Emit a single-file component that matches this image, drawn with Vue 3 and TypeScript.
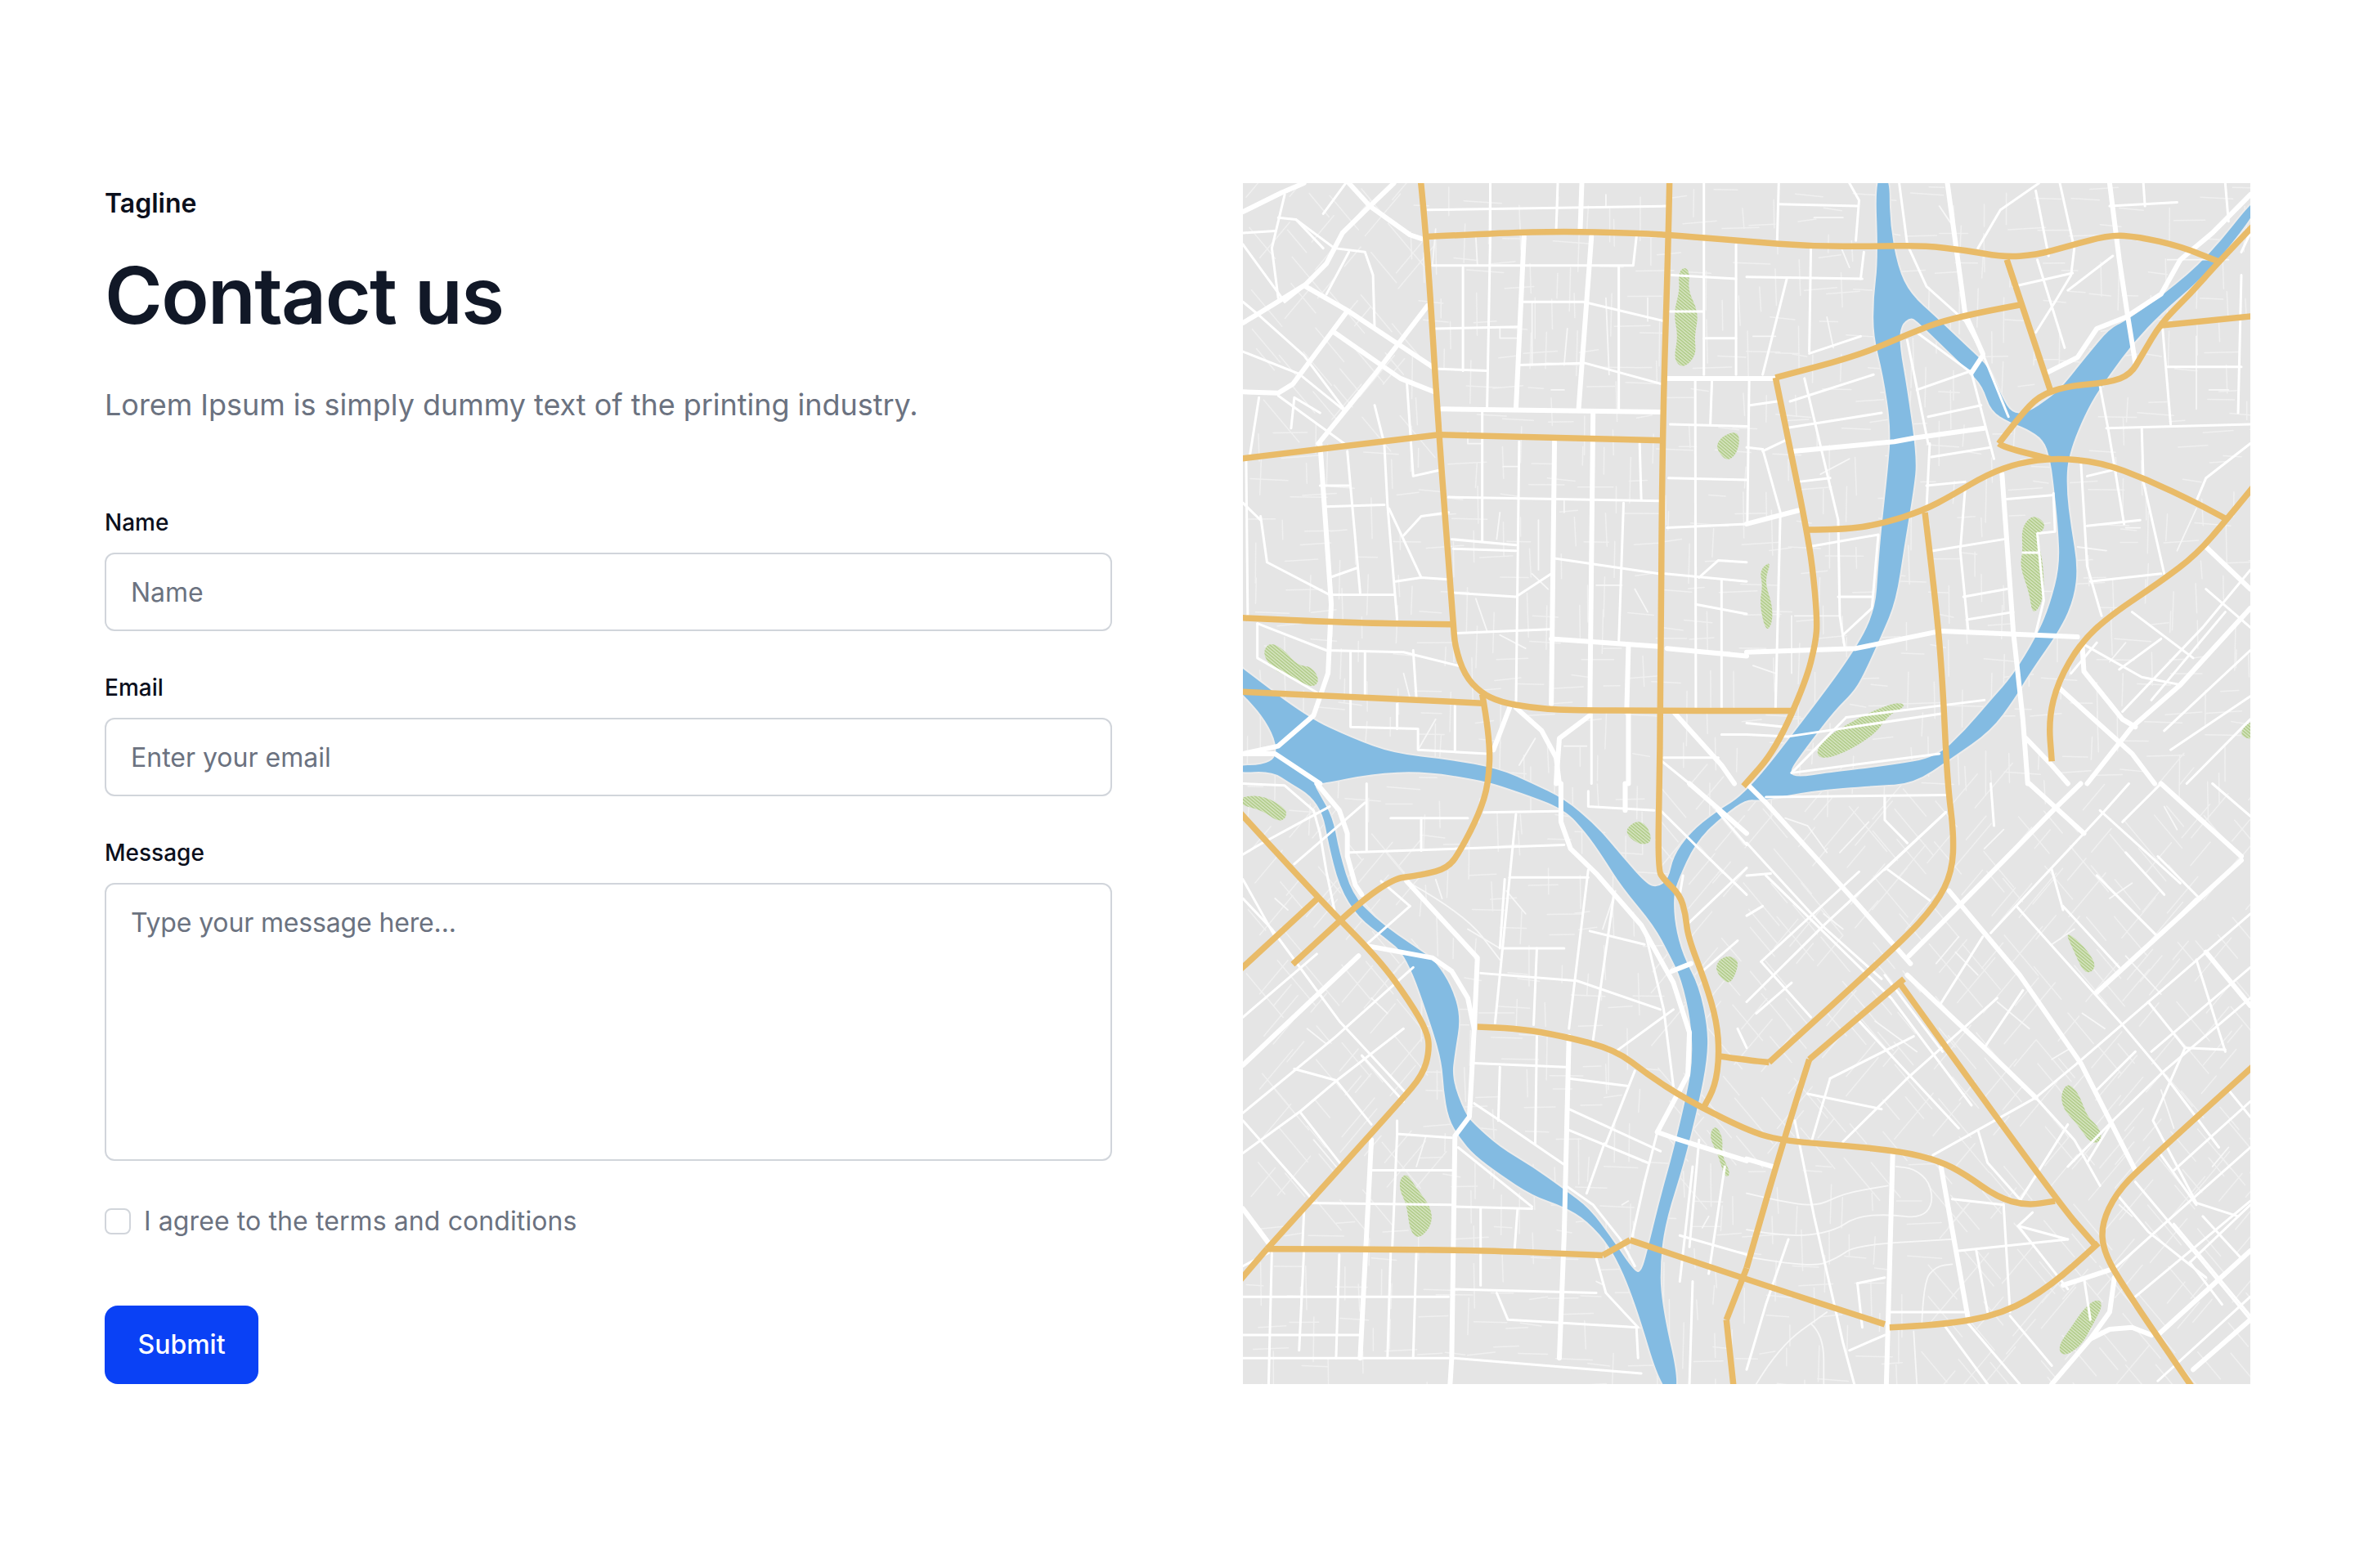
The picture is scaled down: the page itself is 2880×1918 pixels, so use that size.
<template>
  <section class="contact">
    <div class="left">
      <div class="intro">
        <p class="tagline">Tagline</p>
        <h1 class="title">Contact us</h1>
        <p class="lead">Lorem Ipsum is simply dummy text of the printing industry.</p>
      </div>
      <form class="form" @submit.prevent>
        <div class="field">
          <label class="label" for="name">Name</label>
          <input id="name" class="input" type="text" placeholder="Name">
        </div>
        <div class="field">
          <label class="label" for="email">Email</label>
          <input id="email" class="input" type="email" placeholder="Enter your email">
        </div>
        <div class="field">
          <label class="label" for="message">Message</label>
          <textarea id="message" class="input area" placeholder="Type your message here..."></textarea>
        </div>
        <label class="terms">
          <input class="check" type="checkbox">
          <span>I agree to the terms and conditions</span>
        </label>
        <button class="submit" type="submit">Submit</button>
      </form>
    </div>
    <div class="map">
      <svg viewBox="0 0 3136 3136" preserveAspectRatio="none" role="img" aria-label="City map">
        <defs>
          <pattern id="hatch" width="7" height="7" patternUnits="userSpaceOnUse" patternTransform="rotate(35)">
            <rect width="7" height="7" fill="#d6e4c2" />
            <rect width="7" height="3.8" fill="#b3cd8c" />
          </pattern>
        </defs>
        <rect width="3136" height="3136" fill="#e5e5e5" />
        <path v-for="(d, i) in faint" :key="'f' + i" class="street faint" :d="d" />
        <path class="river" :d="riverPath" fill-rule="evenodd" />
        <path v-for="(d, i) in parkPaths" :key="'p' + i" class="park" :d="d" />
        <path v-for="(d, i) in thinStreets" :key="'t' + i" class="street thin" :d="d" />
        <path v-for="(d, i) in midStreets" :key="'m' + i" class="street mid" :d="d" />
        <path v-for="(d, i) in bigStreets" :key="'b' + i" class="street big" :d="d" />
        <path v-for="(d, i) in roadPaths" :key="'r' + i" class="road" :d="d" />
      </svg>
    </div>
  </section>
</template>

<script setup lang="ts">
type Pt = [number, number]

// the map is split in four 1568 x 1568 quarters, a letter in a string switches quarter
const HALF = 1568
const offsets: Record<string, Pt> = { A: [0, 0], B: [HALF, 0], C: [0, HALF], D: [HALF, HALF] }

const parse = (s: string): Pt[] => {
  let off: Pt = [0, 0]
  const pts: Pt[] = []
  for (const tok of s.trim().split(/\s+/)) {
    if (offsets[tok]) {
      off = offsets[tok]
      continue
    }
    const [x, y] = tok.split(',').map(Number)
    pts.push([x + off[0], y + off[1]])
  }
  return pts
}

const line = (s: string) =>
  parse(s).map((p, i) => (i ? 'L' : 'M') + p[0] + ' ' + p[1]).join('')

const mid = (a: Pt, b: Pt): Pt => [(a[0] + b[0]) / 2, (a[1] + b[1]) / 2]

const curve = (s: string) => {
  const p = parse(s)
  let d = `M${p[0][0]} ${p[0][1]}`
  for (let i = 1; i < p.length - 1; i++) {
    const m = mid(p[i], p[i + 1])
    d += `Q${p[i][0]} ${p[i][1]} ${m[0]} ${m[1]}`
  }
  const e = p[p.length - 1]
  return `${d}L${e[0]} ${e[1]}`
}

const blob = (s: string) => {
  const p = parse(s)
  const start = mid(p[p.length - 1], p[0])
  let d = `M${start[0]} ${start[1]}`
  p.forEach((c, i) => {
    const m = mid(c, p[(i + 1) % p.length])
    d += `Q${c[0]} ${c[1]} ${m[0]} ${m[1]}`
  })
  return d + 'Z'
}

const at = (q: string, list: string[]) => list.map((s) => `${q} ${s}`)

const riverOuter = `A -20,1255 0,1268 200,1395 340,1450 470,1490 640,1505 800,1530 900,1568
  C 1000,40 1100,110 1180,190 1255,262 1290,272 1325,250 1340,190 1390,130 1470,75 1568,25
  B 180,1400 330,1230 400,1120 410,1000 420,900 440,750 450,640 425,500 395,400 395,300 410,200 400,-20
  445,-20 445,100 470,220 510,290 590,350 690,430 755,480 795,560 825,600 870,602 945,560 985,530 1060,450
  1130,380 1180,360 1300,290 1440,190 1590,30 1590,70 1480,190 1400,260 1290,340 1205,415 1130,500 1065,580
  1000,710 995,800 1010,900 1030,1000 1020,1080 980,1160 880,1280 835,1345 760,1430 640,1500
  D 520,0 400,5 200,18 45,45 0,40
  C 1500,80 1410,150 1350,260 1340,300 1345,370 1370,450 1420,530 1447,640 1445,720 1420,830 1370,1000
  1320,1130 1300,1230 1300,1350 1365,1590 1305,1590 1220,1350 1150,1215 1070,1140 1000,1105 900,1075 800,1020
  720,970 675,925 640,875 625,800 620,730 590,640 510,450 440,400 360,350 300,270 265,150 250,80 210,30 150,0
  A 90,1535 -20,1540 -20,1520 60,1520 105,1500 100,1450 60,1390 0,1335 -20,1320`

const islandEast = `B 510,350 480,370 475,420 500,540 530,720 520,800 490,950 465,1090 420,1180 360,1290 330,1330
  270,1380 170,1490 130,1540 160,1552 250,1540 450,1520 590,1500 680,1430 760,1350 830,1285 905,1180 945,1100
  975,1000 970,900 955,780 945,720 925,670 870,640 820,625 760,595 735,530 690,490 610,425 530,360`

const islandWest = `A 245,1568 400,1542 560,1535 750,1560 860,1590
  C 1000,65 1070,130 1120,190 1180,270 1280,370 1330,450 1365,510 1395,620 1400,720 1385,800 1340,960 1300,1080
  1265,1200 1240,1280 1215,1270 1150,1190 1080,1110 1000,1060 900,1000 800,950 720,890 690,860 650,770 660,700
  678,610 650,530 600,465 560,440 480,395 410,350 340,290 300,180 280,90 240,30 220,0`

const riverPath = blob(riverOuter) + blob(islandEast) + blob(islandWest)

const parkPaths = [
  'A 1375,218 1392,235 1385,280 1420,340 1405,400 1412,450 1370,485 1340,460 1355,400 1340,340 1360,280 1355,235',
  'A 1535,647 1548,670 1535,710 1505,727 1470,690 1490,662',
  'A 85,1198 130,1220 170,1260 215,1262 240,1300 215,1318 160,1295 90,1270 60,1225',
  'B 78,985 55,1040 80,1100 80,1150 60,1172 40,1100 50,1050 40,1010',
  'B 470,1355 498,1365 440,1390 400,1440 300,1490 230,1505 215,1480 260,1440 320,1410 400,1375',
  'B 890,865 928,885 925,905 903,920 925,1000 925,1090 890,1130 880,1070 850,1000 860,960 855,900',
  'B 1590,1400 1550,1415 1535,1445 1590,1455',
  'C -10,35 60,30 135,65 135,90 110,100 60,70 -10,55',
  'C 1225,95 1260,110 1275,155 1230,160 1185,125',
  'C 1515,448 1545,465 1530,505 1510,525 1470,490 1480,460',
  'C 510,1018 535,1050 585,1105 590,1150 550,1190 520,1170 510,1100 487,1060 490,1030',
  'C 1470,890 1495,925 1490,970 1520,1020 1500,1030 1480,970 1450,920',
  'D 990,385 1040,415 1085,465 1080,490 1050,495 1020,440',
  'D 1000,780 1035,810 1060,870 1100,900 1105,935 1070,940 1030,890 985,850 978,810',
  'D 1090,1345 1110,1360 1080,1410 1040,1470 985,1497 968,1470 1010,1420 1050,1370',
].map(blob)

const roadCurves = [
  'A 553,-10 572,140 610,660 655,1150 660,1210 690,1285 740,1330 800,1355 900,1370 1000,1376 1300,1378 1568,1378 B 150,1378',
  'A 572,140 800,130 1000,126 1200,130 1325,135 1568,152 B 200,165 400,165 550,163 680,175 800,193 900,188 1000,165 1130,135 1220,140 1350,165 1470,205',
  'A 1328,-10 1325,135 1305,670 1300,1378 1296,1568 C 1292,225 1310,250 1360,290 1378,340 1385,400 1440,520 1475,620 1483,710 1470,790 1435,845',
  'B 1590,100 1470,205 1380,290 1290,365 1230,450 1195,500 1130,520 1000,530 910,555 850,610 785,680',
  'B 785,680 800,690 945,720',
  'B 810,200 945,540',
  'B 850,318 640,350 500,395 350,450 90,508',
  'B 90,508 150,750 185,900 205,1000 220,1140 215,1200 185,1300 90,1480 -10,1575',
  'B 1285,372 1590,346',
  'B 185,905 300,905 420,890 550,855 640,815 750,760 850,730 960,718 1100,728 1250,775 1400,835 1495,878',
  'B 555,860 590,1100 610,1300 625,1568 D 645,130 640,230 590,315 480,415 70,728',
  'C 1483,712 1568,722 D 70,728',
  'B 1590,780 1495,878 1400,970 1290,1040 1130,1130 1040,1200 970,1300 940,1400 950,1510',
  'A -10,720 610,657',
  'A 610,657 1305,672',
  'A -10,1135 300,1148 650,1152',
  'A -10,1328 745,1358',
  'A 745,1335 770,1450 765,1568 C 735,80 680,170 640,220 560,238 440,252 155,472',
  'C -10,75 235,300 420,455 520,570 575,650 580,700 560,760 490,830 75,1215',
  'C 75,1215 -10,1298',
  'C -10,487 235,298',
  'C 75,1215 650,1215 1120,1232',
  'C 1120,1232 1205,1192',
  'C 1205,1192 1568,1295 D 430,1412',
  'D 445,1420 600,1415 800,1385 950,1310 1095,1200',
  'C 730,635 850,638 1000,660 1160,695 1260,760 1380,825 1568,905 D 105,932 300,945 480,960 600,985 680,1020 780,1080 870,1102 960,1090',
  'D 490,510 195,720',
  'D 195,720 115,930 0,1265',
  'D 0,1265 -63,1400',
  'D -63,1400 -40,1580',
  'D 480,525 960,1085 1090,1210',
  'D 1590,728 1230,1000 1150,1070 1105,1150 1110,1220 1170,1310 1390,1580',
]
const roadPaths = roadCurves.map(curve)

const bigStreets = [
  ...at('A', [
    '0,75 120,25 190,0', '330,0 395,60 520,135 555,145', '470,0 395,60 310,130 260,210 195,265 50,340 0,365',
    '195,270 330,335 590,480', '285,390 490,510 595,545', '0,545 110,548 155,525 320,340',
    '235,680 410,500 575,320', '240,680 275,1100 265,1280 220,1390 110,1470 0,1490', '0,1490 100,1490 240,1568',
    '1055,0 1050,120', '1085,140 1045,590', '875,140 850,590', '620,590 1305,598', '1090,598 1080,1370',
    '970,675 960,1360', '960,1190 1295,1210', '1200,1210 1195,1370', '780,1480 830,1370',
    '850,1370 930,1430 975,1500 985,1568', '975,1568 985,1450 1080,1390', '1200,1380 1200,1568',
    '1345,1385 1490,1520 1530,1568', '1320,510 1568,510', '1320,1215 1568,1235',
  ]),
  ...at('B', [
    '0,510 85,510', '0,890 160,855', '795,760 830,1170 860,1400 875,1568', '700,495 735,450',
    '1130,0 1160,200 1185,340 1210,470', '935,495 1030,455 1090,380 1180,350 1290,290 1350,200 1450,130 1568,30',
    '975,1320 1200,1490 1270,1568', '870,1450 950,1520 1000,1568', '1568,1110 1350,1310 1200,1420 1060,1568',
    '1430,950 1568,1060', '145,700 460,675 525,665 740,640', '0,1225 340,1215 600,1170', '610,1170 1030,1185',
    '625,0 680,340 735,445', '1045,1210 1050,1275 1170,1400 1210,1420',
  ]),
  ...at('C', [
    '230,0 300,70 325,130 325,190 350,265 370,290', '510,255 730,455 720,640 705,870 660,920 650,1500 645,1568',
    '395,425 590,455 650,490 700,560 720,640', '990,0 990,100 1020,170 1100,235 1240,370 1340,520 1390,650 1385,760 1360,800',
    '1335,490 1395,470', '1290,910 1340,925 1568,985', '1015,660 1000,1180 985,1500', '0,735 360,450',
    '0,1110 80,1200', '400,930 365,1500', '1190,0 1190,70', '1360,800 1290,910', '1390,0 1568,130',
  ]),
  ...at('D', [
    '0,0 60,50 330,300 510,470', '500,500 740,690 900,820', '630,280 850,500 1040,730 1210,1010',
    '880,0 1050,130', '1290,0 1540,190', '1430,440 1568,580', '505,450 660,320 960,65 1040,0',
    '1090,545 1540,200', '0,980 80,1000', '455,960 435,1568', '985,1310 1130,1270', '1145,1290 1130,1380 1070,1450 950,1568',
    '1070,1450 1130,1425 1200,1420 1260,1440', '1280,1440 1568,1220', '1390,1530 1568,1400', '605,1000 690,1400',
  ]),
].map(line)

const midStreets = [
  ...at('A', [
    '575,70 1320,60', '770,0 770,130', '770,140 760,590', '980,0 975,125', '590,215 1215,215 1225,140',
    '685,220 685,490', '600,380 860,375', '610,485 760,490', '870,310 1060,310 1310,360', '1065,470 1305,525',
    '860,475 1060,470', '745,595 745,935', '640,820 1300,830', '1170,220 1170,590', '860,675 850,1370',
    '1185,835 1170,1200', '1235,680 1240,825', '650,930 850,945', '655,955 850,960', '970,980 1295,1020',
    '660,1070 850,1080 960,1020', '665,1175 955,1165', '475,1040 555,1030 640,1035', '455,850 555,1030',
    '510,515 530,765 610,750', '325,700 365,1070', '255,845 440,840', '240,790 330,790',
    '55,870 75,990 270,1075 470,1075', '0,835 55,880', '270,1030 355,1005', '10,720 15,1130',
    '45,1150 45,1240 230,1330', '45,1150 260,1220 500,1225 670,1260', '335,1225 335,1420 545,1425 545,1480 760,1490',
    '380,1225 380,1340', '530,1220 540,1345', '480,1360 480,1425', '660,1365 660,1480', '1085,1385 1085,1568',
    '1310,1500 1480,1500', '1305,1510 1390,1568', '1490,1440 1568,1440', '1435,0 1435,500', '1535,160 1535,500',
    '1335,240 1535,250', '1330,335 1435,335', '1435,405 1535,405', '1408,515 1410,1380', '1460,515 1455,630',
    '1330,630 1568,635', '1325,770 1568,775', '1320,900 1568,890', '1315,1020 1568,1040', '1490,1035 1490,1370',
    '1410,1100 1568,1125', '1420,1030 1480,985 1568,990', '130,30 90,170 110,300',
    '110,90 165,95 285,170 380,180 405,240 410,380', '250,80 320,0', '0,130 100,125', '0,160 130,310',
    '50,345 190,450 315,590', '185,505 310,590', '110,555 315,680', '410,580 440,680 450,840 480,1140',
    '0,440 180,500', '50,560 20,720', '165,95 250,170', '0,310 50,345', '130,310 190,270', '330,180 260,290',
    '150,640 160,560 240,600', '500,920 555,870 640,860',
  ]),
  ...at('B', [
    '100,0 95,150', '100,55 345,60', '320,0 350,45 340,150', '125,250 50,500', '0,245 360,250', '200,170 195,440',
    '195,445 355,400', '365,180 355,250', '8,515 2,890', '10,580 95,570', '0,690 50,695', '50,695 105,860 90,1370',
    '50,700 125,670', '135,570 395,500', '120,640 420,600', '180,510 285,880 290,1130 305,1210', '160,780 260,770',
    '190,950 410,918 390,1110 300,1180', '285,1080 390,1080', '130,1445 610,1385', '310,1395 740,1350',
    '140,1540 310,1395', '140,1540 600,1490', '530,390 700,495', '700,495 770,720', '475,0 500,160 560,270 680,360 735,445 815,610',
    '570,680 560,850', '560,790 680,780', '575,715 760,690', '500,410 565,680', '530,540 700,490', '565,610 730,580',
    '680,800 665,960 690,1170', '580,960 800,930', '675,1080 810,1060', '685,1140 830,1120', '810,825 950,815',
    '955,810 960,910 905,915 925,1090 900,1175', '860,965 910,965', '1100,530 1125,640 1175,890', '1040,720 1060,1000 1105,1130',
    '1060,895 1225,880', '1120,640 1568,630', '1230,640 1235,780 1300,1020', '1060,765 1160,745', '1070,1040 1290,1020',
    '975,0 1020,170 1010,240 960,310 900,390', '910,0 790,70 720,170', '905,200 990,430', '830,270 1015,235', '900,20 940,190',
    '1000,280 1140,190', '1130,60 1340,50', '1235,0 1240,60', '1490,0 1500,100', '1295,380 1320,630', '1310,480 1540,480',
    '1540,240 1530,600', '1540,180 1568,130', '1400,830 1430,770 1568,680', '1040,1200 1230,1290 1350,1310',
    '1430,1060 1568,1160', '1170,1380 1420,1160 1568,1010', '1260,1350 1490,1120', '1300,1430 1568,1220',
    '1320,1480 1568,1340', '1370,1568 1568,1400', '1160,1270 1290,1190', '1200,1120 1390,1240', '1090,1200 1010,1280',
    '0,1440 130,1445', '0,1410 120,1420',
  ]),
  ...at('C', [
    '0,0 130,5 220,70 240,130 260,230 285,330', '385,420 520,320', '1250,1040 1210,1190', '1290,910 1250,1040',
    '850,80 785,625', '1075,225 1015,640', '0,300 90,380 300,620 510,810', '0,860 290,660 530,480',
    '0,965 180,855 300,770 500,640', '0,610 230,445', '0,185 50,160 270,60', '160,210 380,50', '180,860 310,1000',
    '0,880 210,1080', '160,745 290,775', '290,775 400,890', '370,710 500,830', '480,880 480,915 650,925', '480,915 465,1210',
    '395,1010 650,1010', '200,1095 650,1100', '660,1105 900,1110', '190,1120 185,1210', '90,1225 80,1568',
    '190,1220 175,1480', '300,1230 290,1500', '460,1225 450,1500', '540,1225 530,1500', '0,1340 640,1340', '0,1440 370,1440',
    '0,1500 640,1500', '650,1500 1240,1540', '650,1320 1100,1330', '790,1330 825,1400 1230,1420', '1225,1420 1230,1500',
    '1100,1240 1130,1330 1230,1420', '740,1110 740,1310', '855,1110 845,1225', '720,835 800,880 1000,995', '670,950 900,1105',
    '1005,1050 1090,1100 1175,1190 1220,1260', '720,730 1005,740', '800,740 795,880', '915,660 910,940', '1015,770 1200,790',
    '1015,850 1300,960', '1015,905 1260,990', '1125,940 1070,1070', '1220,750 1130,940', '1160,700 1340,590',
    '330,180 1000,160', '750,75 980,72', '385,0 385,175', '555,90 555,175', '460,90 700,90', '810,430 1000,430',
    '740,495 1040,515 1300,590', '1080,385 1250,420', '915,430 905,630', '830,245 1075,245', '800,430 815,250', '1155,290 1090,670',
    '1250,380 1310,590 1340,790', '1370,240 1360,290', '1300,70 1420,170 1568,290', '1475,70 1568,160', '1380,370 1568,220',
    '1430,490 1540,410', '1540,640 1568,690', '1075,20 1075,60 1280,70', '1400,1000 1360,1300', '1420,930 1390,1210',
    '1500,1000 1450,1280', '1400,1300 1390,1568', '1360,1180 1568,1230', '0,250 100,400', '80,1225 0,1260', '430,255 520,320',
  ]),
  ...at('D', [
    '1100,70 1350,260', '1450,0 1568,85', '840,320 1170,630 1300,760 1470,950', '900,820 1020,930 1100,1050',
    '760,390 1100,85 1190,0', '1030,730 1568,340', '1140,880 1300,750 1568,560', '0,570 240,370 620,75', '600,580 735,400',
    '740,690 860,540', '580,970 900,820 1030,730', '0,155 240,375', '350,620 660,900', '45,465 200,610', '240,375 420,510',
    '430,35 430,95 500,155', '620,75 430,225', '440,225 570,305', '60,35 620,30', '760,0 770,110', '950,225 985,330',
    '985,320 1160,480', '1090,240 1280,400', '1365,690 1490,695', '1365,690 1265,880 1400,1095 1530,1130', '720,905 750,990 855,1090',
    '1000,890 850,1090', '190,810 420,850', '260,770 200,940', '260,770 520,660', '300,935 500,770 780,560', '150,880 210,1130 300,1460 335,1568',
    '800,1100 820,1380', '715,1220 750,1380', '640,1085 800,1100', '845,1155 890,1120', '845,1155 1000,1320', '845,1155 1000,1190',
    '1050,1290 1070,1400', '345,1305 430,1290', '345,1305 360,1420', '445,1380 690,1380', '320,1480 430,1440', '130,1190 60,1360 0,1530',
    '620,1420 750,1568', '820,1390 950,1520', '690,1410 850,1568', '1210,1340 1568,1090', '1140,1270 1300,1150 1568,950',
    '1210,1040 1390,1220 1568,1400', '1290,970 1400,1100', '1500,800 1568,870', '1380,1250 1480,1360', '60,240 450,560 700,840',
    '430,500 610,700', '0,345 50,320', '0,240 75,235', '1000,1000 1140,880', '1060,990 1140,880', '1210,700 1090,800',
    '1250,570 1365,690', '1400,460 1490,700', '1150,1070 1250,1170 1430,1290', '660,1220 1000,1190',
    '1280,190 1410,300', '1280,400 1400,300', '1260,700 1568,480', '1330,1150 1568,1390', '1380,1250 1568,1100',
    '1280,1560 1568,1340', '30,600 140,520', '45,465 350,230', '1170,100 1290,0', '1180,180 1300,290',
    '1420,1130 1540,1240', '1330,1010 1568,830',
  ]),
].map(line)

const curvedStreets = [
  'D 0,1070 100,1090 220,1105 300,1070 440,1050',
  'D 0,1165 130,1185 270,1170 340,1130 445,1125 540,1135 580,1100 570,1040 520,1005 465,1000',
  'D 0,1235 200,1265 280,1240 340,1205 640,1190',
  'D 545,1420 550,1300 590,1260 640,1255',
  'D 30,1568 100,1470 250,1380',
  'D 200,1410 240,1440 240,1568',
  'D 520,1430 530,1568',
  'C 520,260 690,340 800,460',
].map(curve)

const thinStreets = [
  ...curvedStreets,
  ...at('A', [
    '600,120 590,215', '725,140 730,215', '1130,30 1130,60', '900,310 900,475', '800,380 800,405 860,405',
    '1010,380 1000,475', '960,540 1000,540', '1130,300 1140,500', '1260,300 1260,360', '700,650 700,680 745,680',
    '810,740 860,740', '800,860 790,930', '920,880 920,1010', '1000,830 1000,860', '900,1020 950,1060',
    '725,1085 760,1170', '800,1180 880,1215', '1100,1050 1180,1050', '1220,1060 1260,1120', '500,1280 520,1345',
    '600,1400 545,1480', '910,1450 860,1520', '1000,1470 1070,1470',
  ]),
  ...at('B', [
    '210,90 300,90', '290,160 320,220', '20,400 90,400', '250,350 270,430', '230,760 320,720', '150,1130 290,1130',
    '140,1130 140,1280', '20,1260 90,1280', '1030,950 1120,960', '1180,900 1225,900', '1400,850 1340,960', '1310,200 1500,200',
    '1400,400 1400,590', '1440,540 1500,540', '1130,1250 1180,1200', '600,60 640,110',
  ]),
  ...at('C', [
    '400,560 450,600', '100,300 140,330', '200,640 260,680', '220,930 300,1010', '1180,1100 1200,1090', '820,280 880,340',
    '570,920 540,1000', '700,380 800,430', '1160,280 1120,380', '1100,1300 1125,1310', '1450,1130 1430,1160', '600,250 620,300',
  ]),
  ...at('D', [
    '120,90 190,110 250,180', '290,180 380,100', '740,170 800,120', '590,470 660,400', '650,440 720,500', '950,420 1020,380',
    '1130,300 1200,260', '1300,60 1340,120', '1290,550 1180,450', '1045,600 1115,640', '950,720 1010,690', '780,570 880,640',
    '1160,1100 1200,1130', '1450,1000 1500,950', '1290,800 1330,900', '400,620 530,700', '240,340 300,380',
  ]),
].map((s) => (s.startsWith('M') ? s : line(s)))

// small deterministic generator so the fine street texture is the same each load
let seed = 11
const rnd = () => {
  seed = (seed * 16807) % 2147483647
  return seed / 2147483647
}

const isDiagonal = (x: number, y: number) =>
  (y > HALF && x > HALF - 300 && y < 2560) || (y > 1568 && x > 2100) || (x < 540 && y > 1640 && y < 2700) || (x < 500 && y < 620)

const faint: string[] = []
for (let y = 10; y < 3130; y += 84) {
  for (let x = 10; x < 3130; x += 84) {
    const px = x + rnd() * 60
    const py = y + rnd() * 60
    const len = 45 + rnd() * 75
    if (isDiagonal(px, py)) {
      const dir = rnd() > 0.5 ? 1 : -1
      faint.push(`M${px} ${py}L${px + len} ${py + len * dir}`)
    } else if (rnd() > 0.5) {
      faint.push(`M${px} ${py}L${px + (rnd() - 0.5) * 10} ${py + len}`)
    } else {
      faint.push(`M${px} ${py}L${px + len} ${py + (rnd() - 0.5) * 16}`)
    }
  }
}
</script>

<style scoped>
.contact {
  display: grid;
  grid-template-columns: 1fr 1fr;
  gap: 160px;
  padding: 224px 128px 225px;
  font-family: Inter, "Liberation Sans", sans-serif;
}

.left {
  display: flex;
  flex-direction: column;
  gap: 96px;
}

.tagline {
  margin: 0 0 30px;
  padding-top: 1px;
  font-size: 32px;
  line-height: 48px;
  font-weight: 600;
  color: #0b0f1c;
}

.title {
  margin: 0 0 49px;
  font-size: 96px;
  line-height: 116px;
  font-weight: 600;
  letter-spacing: -1.55px;
  color: #111827;
}

.lead {
  margin: 0;
  font-size: 36px;
  line-height: 54px;
  letter-spacing: -0.03px;
  color: #6b7280;
}

.form {
  display: flex;
  flex-direction: column;
  gap: 48px;
}

.field {
  display: flex;
  flex-direction: column;
  gap: 16px;
}

.label {
  font-size: 28px;
  line-height: 42px;
  font-weight: 500;
  color: #0b0f1c;
}

.input {
  box-sizing: border-box;
  height: 96px;
  padding: 0 30px;
  border: 2px solid #d1d5db;
  border-radius: 12px;
  background: #fff;
  font: 400 32px/48px Inter, "Liberation Sans", sans-serif;
  color: #111827;
  outline: none;
}

.input::placeholder {
  color: #6b7280;
  opacity: 1;
}

.area {
  height: 340px;
  padding: 23px 30px;
  letter-spacing: -0.15px;
  resize: none;
  display: block;
}

.terms {
  display: flex;
  align-items: center;
  gap: 16px;
  margin-top: 2px;
  font-size: 32px;
  line-height: 48px;
  letter-spacing: 0.1px;
  color: #6b7280;
}

.check {
  appearance: none;
  box-sizing: border-box;
  width: 32px;
  height: 32px;
  margin: 0;
  border: 2px solid #d1d5db;
  border-radius: 8px;
  background: #fff;
}

.submit {
  align-self: flex-start;
  margin-top: 31px;
  width: 188px;
  height: 96px;
  padding: 0;
  border: 0;
  border-radius: 16px;
  background: #0a41f5;
  color: #fff;
  font: 500 32px/48px Inter, "Liberation Sans", sans-serif;
}

.map {
  position: relative;
}

.map svg {
  position: absolute;
  inset: 0;
  width: 100%;
  height: 100%;
  display: block;
}

.street {
  fill: none;
  stroke: #fff;
  stroke-linecap: round;
  stroke-linejoin: round;
  vector-effect: non-scaling-stroke;
}

.faint {
  stroke: #f0f0f0;
  stroke-width: 1.5px;
}

.thin {
  stroke: #f7f7f7;
  stroke-width: 1.8px;
}

.mid {
  stroke-width: 3px;
}

.big {
  stroke-width: 6px;
}

.river {
  fill: #83bbe2;
  stroke: #ececec;
  stroke-width: 4px;
  paint-order: stroke;
  vector-effect: non-scaling-stroke;
}

.park {
  fill: url(#hatch);
}

.road {
  fill: none;
  stroke: #e9bb68;
  stroke-width: 7.5px;
  stroke-linejoin: round;
  vector-effect: non-scaling-stroke;
}
</style>

<style>
body {
  background: #fff;
}
</style>
